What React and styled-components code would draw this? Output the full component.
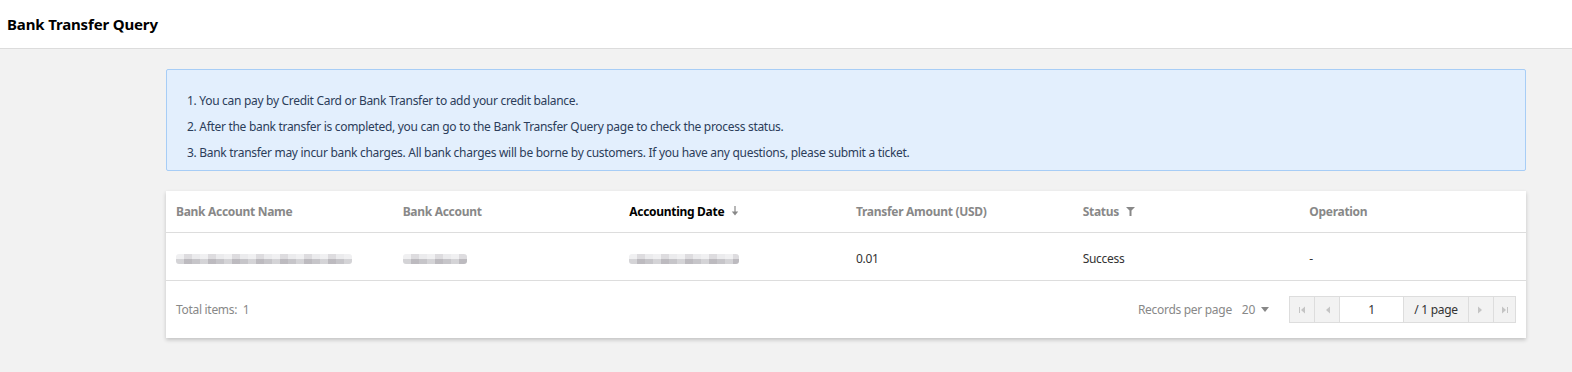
import styled, { createGlobalStyle } from "styled-components";

const GlobalStyle = createGlobalStyle`
  body {
    margin: 0;
    background: #f2f2f2;
    font-family: "Noto Sans", "Open Sans", sans-serif;
    font-size: 12px;
    letter-spacing: -0.3px;
    color: #333;
  }
`;

const Header = styled.header`
  height: 48px;
  background: #fff;
  border-bottom: 1px solid #dcdcdc;
  display: flex;
  align-items: center;
  padding-left: 7px;
`;
const Title = styled.h1`
  margin: 0;
  font-size: 15px;
  font-weight: 700;
  letter-spacing: -0.15px;
  color: #000;
`;

const Main = styled.main`
  padding: 20px 46px 30px 166px;
  display: flex;
  flex-direction: column;
  gap: 20px;
`;

const Notice = styled.ol`
  margin: 0;
  list-style: none;
  background: #e3effd;
  border: 1px solid #a7cdf6;
  border-radius: 2px;
  padding: 18px 20px 4px 20px;
  color: #2c3d5a;
`;
const NoticeLine = styled.li`
  line-height: 26px;
`;

const Card = styled.div`
  background: #fff;
  box-shadow: 0 2px 4px rgba(0, 0, 0, 0.2);
`;

const Table = styled.div`
  display: grid;
  grid-template-columns: repeat(6, 1fr);
`;
const HeadCell = styled.div`
  height: 41px;
  padding: 0 10px;
  display: flex;
  align-items: center;
  gap: 7px;
  font-weight: 700;
  color: ${(p) => (p.$active ? "#000" : "#888")};
  border-bottom: 1px solid #dddddd;
`;
const Cell = styled.div`
  height: 48px;
  padding: 3px 10px 0;
  box-sizing: border-box;
  display: flex;
  align-items: center;
  color: #333;
  border-bottom: 1px solid #dddddd;
`;

const Blur = styled.div`
  width: ${(p) => p.$w}px;
  height: 10px;
  border-radius: 3px;
  background:
    repeating-linear-gradient(
      90deg,
      rgba(255, 255, 255, 0.25) 0 8px,
      rgba(120, 110, 120, 0.12) 8px 16px,
      rgba(255, 255, 255, 0) 16px 24px
    ),
    linear-gradient(to bottom, #ebebed 0 50%, #c6c5c9 50% 100%);
  margin-top: 1px;
`;

const Footer = styled.div`
  height: 57px;
  padding: 0 10px;
  display: flex;
  align-items: center;
  justify-content: space-between;
`;
const Total = styled.span`
  color: #888;
`;
const Paging = styled.div`
  display: flex;
  align-items: center;
  color: #888;
`;
const PerPage = styled.span`
  margin-right: 10px;
`;
const SizeSelect = styled.span`
  display: flex;
  align-items: center;
  gap: 6px;
  margin-right: 20px;
`;
const Caret = styled.span`
  width: 0;
  height: 0;
  border-left: 4px solid transparent;
  border-right: 4px solid transparent;
  border-top: 5px solid #888;
`;
const Pager = styled.div`
  display: flex;
  height: 25px;
  border: 1px solid #ddd;
`;
const PageBtn = styled.button`
  width: ${(p) => p.$w || 25}px;
  border: none;
  border-right: 1px solid #ddd;
  background: #f2f2f2;
  padding: 0;
  display: flex;
  align-items: center;
  justify-content: center;
  &:last-child {
    border-right: none;
  }
`;
const PageInput = styled.div`
  width: 63px;
  background: #fff;
  border-right: 1px solid #ddd;
  display: flex;
  align-items: center;
  justify-content: center;
  color: #333;
`;
const PageCount = styled.div`
  width: 64px;
  background: #f2f2f2;
  border-right: 1px solid #ddd;
  display: flex;
  align-items: center;
  justify-content: center;
  color: #333;
`;

const Arrow = ({ dir, bar }) => (
  <svg width="8" height="8" viewBox="0 0 8 8">
    {dir === "left" ? (
      <>
        {bar && <rect x="1" y="1" width="1" height="6" fill="#c4c4c4" />}
        <polygon points="7,0.5 3,4 7,7.5" fill="#c4c4c4" />
      </>
    ) : (
      <>
        <polygon points="1,0.5 5,4 1,7.5" fill="#c4c4c4" />
        {bar && <rect x="6" y="1" width="1" height="6" fill="#c4c4c4" />}
      </>
    )}
  </svg>
);

const SortIcon = () => (
  <svg width="8" height="11" viewBox="0 0 8 11">
    <rect x="3.4" y="0" width="1.2" height="6" fill="#888" />
    <polygon points="0.8,5.5 7.2,5.5 4,9.5" fill="#888" />
  </svg>
);
const FilterIcon = () => (
  <svg width="9" height="10" viewBox="0 0 9 10">
    <polygon points="0,0 9,0 5.5,3.5 5.5,9 3.5,9 3.5,3.5" fill="#888" />
  </svg>
);

const notices = [
  "1. You can pay by Credit Card or Bank Transfer to add your credit balance.",
  "2. After the bank transfer is completed, you can go to the Bank Transfer Query page to check the process status.",
  "3. Bank transfer may incur bank charges. All bank charges will be borne by customers. If you have any questions, please submit a ticket.",
];

export default function App() {
  return (
    <>
      <GlobalStyle />
      <Header>
        <Title>Bank Transfer Query</Title>
      </Header>
      <Main>
        <Notice>
          {notices.map((n) => (
            <NoticeLine key={n}>{n}</NoticeLine>
          ))}
        </Notice>
        <Card>
          <Table>
            <HeadCell>Bank Account Name</HeadCell>
            <HeadCell>Bank Account</HeadCell>
            <HeadCell $active>
              Accounting Date <SortIcon />
            </HeadCell>
            <HeadCell>Transfer Amount (USD)</HeadCell>
            <HeadCell>
              Status <FilterIcon />
            </HeadCell>
            <HeadCell>Operation</HeadCell>

            <Cell>
              <Blur $w={176} />
            </Cell>
            <Cell>
              <Blur $w={64} />
            </Cell>
            <Cell>
              <Blur $w={110} />
            </Cell>
            <Cell>0.01</Cell>
            <Cell>Success</Cell>
            <Cell>-</Cell>
          </Table>
          <Footer>
            <Total>Total items:&nbsp; 1</Total>
            <Paging>
              <PerPage>Records per page</PerPage>
              <SizeSelect>
                20 <Caret />
              </SizeSelect>
              <Pager>
                <PageBtn>
                  <Arrow dir="left" bar />
                </PageBtn>
                <PageBtn>
                  <Arrow dir="left" />
                </PageBtn>
                <PageInput>1</PageInput>
                <PageCount>/ 1 page</PageCount>
                <PageBtn>
                  <Arrow dir="right" />
                </PageBtn>
                <PageBtn $w={21}>
                  <Arrow dir="right" bar />
                </PageBtn>
              </Pager>
            </Paging>
          </Footer>
        </Card>
      </Main>
    </>
  );
}
